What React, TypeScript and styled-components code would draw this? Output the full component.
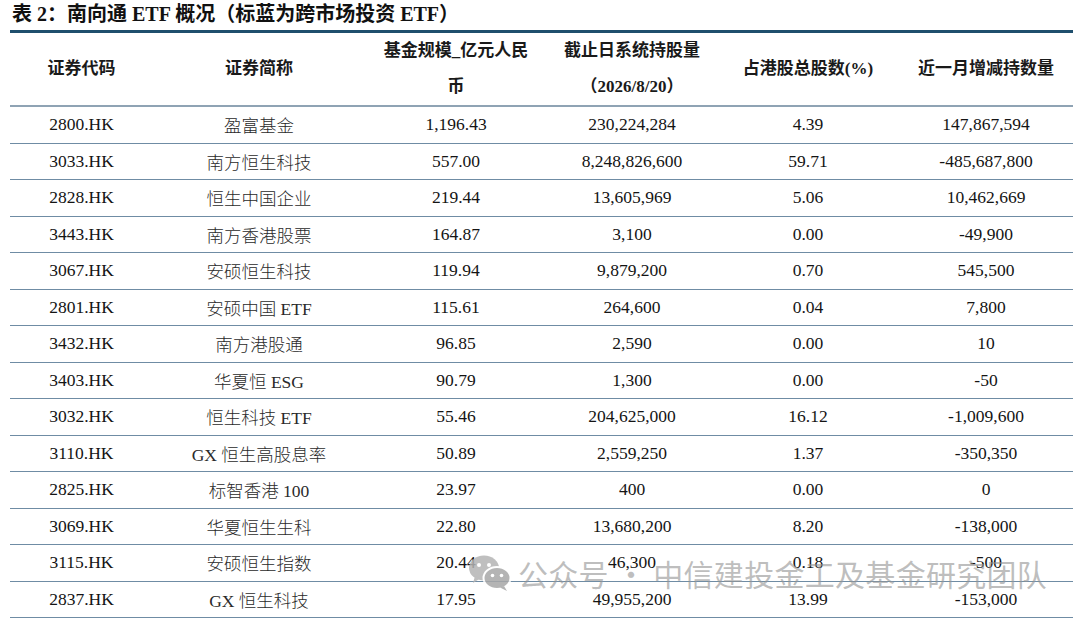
import styled, { createGlobalStyle } from 'styled-components';

interface EtfRow {
  code: string;
  name: string;
  scale: string;
  holding: string;
  ratio: string;
  change: string;
}

const rows: EtfRow[] = [
  { code: '2800.HK', name: '盈富基金', scale: '1,196.43', holding: '230,224,284', ratio: '4.39', change: '147,867,594' },
  { code: '3033.HK', name: '南方恒生科技', scale: '557.00', holding: '8,248,826,600', ratio: '59.71', change: '-485,687,800' },
  { code: '2828.HK', name: '恒生中国企业', scale: '219.44', holding: '13,605,969', ratio: '5.06', change: '10,462,669' },
  { code: '3443.HK', name: '南方香港股票', scale: '164.87', holding: '3,100', ratio: '0.00', change: '-49,900' },
  { code: '3067.HK', name: '安硕恒生科技', scale: '119.94', holding: '9,879,200', ratio: '0.70', change: '545,500' },
  { code: '2801.HK', name: '安硕中国 ETF', scale: '115.61', holding: '264,600', ratio: '0.04', change: '7,800' },
  { code: '3432.HK', name: '南方港股通', scale: '96.85', holding: '2,590', ratio: '0.00', change: '10' },
  { code: '3403.HK', name: '华夏恒 ESG', scale: '90.79', holding: '1,300', ratio: '0.00', change: '-50' },
  { code: '3032.HK', name: '恒生科技 ETF', scale: '55.46', holding: '204,625,000', ratio: '16.12', change: '-1,009,600' },
  { code: '3110.HK', name: 'GX 恒生高股息率', scale: '50.89', holding: '2,559,250', ratio: '1.37', change: '-350,350' },
  { code: '2825.HK', name: '标智香港 100', scale: '23.97', holding: '400', ratio: '0.00', change: '0' },
  { code: '3069.HK', name: '华夏恒生生科', scale: '22.80', holding: '13,680,200', ratio: '8.20', change: '-138,000' },
  { code: '3115.HK', name: '安硕恒生指数', scale: '20.44', holding: '46,300', ratio: '0.18', change: '-500' },
  { code: '2837.HK', name: 'GX 恒生科技', scale: '17.95', holding: '49,955,200', ratio: '13.99', change: '-153,000' },
];

const columnWidths = [143, 212, 182, 170, 182, 174];

function WeChatIcon() {
  return (
    <svg width="44" height="38" viewBox="0 0 44 38">
      <ellipse cx="16" cy="14" rx="15" ry="12.5" fill="#b4b4b4" />
      <path d="M7 22 L5 29 L12 24.5 Z" fill="#b4b4b4" />
      <circle cx="11" cy="11" r="2" fill="#fff" />
      <circle cx="21" cy="11" r="2" fill="#fff" />
      <ellipse cx="29" cy="24" rx="13.5" ry="11" fill="#a8a8a8" stroke="#fff" strokeWidth="2" />
      <path d="M36 32 L39 37 L32 33.5 Z" fill="#a8a8a8" />
      <circle cx="24.5" cy="21.5" r="1.8" fill="#fff" />
      <circle cx="33.5" cy="21.5" r="1.8" fill="#fff" />
    </svg>
  );
}

function App() {
  return (
    <>
      <GlobalStyle />
      <Page>
        <Title>表 2：南向通 ETF 概况（标蓝为跨市场投资 ETF）</Title>
        <TableWrapper>
          <Table>
            <colgroup>
              {columnWidths.map((w, i) => (
                <col key={i} style={{ width: w }} />
              ))}
            </colgroup>
            <thead>
              <tr>
                <HeadCell>证券代码</HeadCell>
                <HeadCell>证券简称</HeadCell>
                <HeadCell>
                  基金规模_亿元人民
                  <br />币
                </HeadCell>
                <HeadCell>
                  截止日系统持股量
                  <br />（2026/8/20）
                </HeadCell>
                <HeadCell>占港股总股数(%)</HeadCell>
                <HeadCell>近一月增减持数量</HeadCell>
              </tr>
            </thead>
            <tbody>
              {rows.map((row) => (
                <tr key={row.code}>
                  <BodyCell>{row.code}</BodyCell>
                  <BodyCell $cjk>{row.name}</BodyCell>
                  <BodyCell>{row.scale}</BodyCell>
                  <BodyCell>{row.holding}</BodyCell>
                  <BodyCell>{row.ratio}</BodyCell>
                  <BodyCell>{row.change}</BodyCell>
                </tr>
              ))}
            </tbody>
          </Table>
          <Watermark>
            <WeChatIcon />
            <WatermarkText>公众号 · 中信建投金工及基金研究团队</WatermarkText>
          </Watermark>
        </TableWrapper>
      </Page>
    </>
  );
}

const GlobalStyle = createGlobalStyle`
  html, body {
    margin: 0;
    padding: 0;
    background: #ffffff;
  }
  body {
    font-family: 'Liberation Serif', 'Noto Sans CJK SC', serif;
    color: #1b1b1b;
  }
`;

const Page = styled.div`
  width: 1080px;
  height: 619px;
  overflow: hidden;
  padding: 1px 7px 0 10px;
  box-sizing: border-box;
`;

const Title = styled.div`
  height: 29px;
  padding-left: 2px;
  font-size: 20px;
  font-weight: 700;
  line-height: 26px;
  color: #111;
  white-space: nowrap;
`;

const TableWrapper = styled.div`
  position: relative;
  width: 1063px;
`;

const Table = styled.table`
  width: 1063px;
  border-collapse: collapse;
  table-layout: fixed;
  border-top: 3px solid #1f4f6d;
`;

const HeadCell = styled.th`
  height: 69px;
  padding: 0;
  text-align: center;
  vertical-align: middle;
  font-size: 17px;
  font-weight: 700;
  line-height: 36px;
  color: #1a1a1a;
  border-bottom: 2px solid #8fa3b4;
  white-space: nowrap;
`;

const BodyCell = styled.td<{ $cjk?: boolean }>`
  height: 35.5px;
  padding: 0;
  text-align: center;
  vertical-align: middle;
  font-size: 17.5px;
  font-weight: ${({ $cjk }) => ($cjk ? 300 : 400)};
  color: ${({ $cjk }) => ($cjk ? '#2a2a2a' : '#141414')};
  border-bottom: 1px solid #6f8ca4;
  white-space: nowrap;
`;

const Watermark = styled.div`
  position: absolute;
  left: 458px;
  top: 521px;
  display: flex;
  align-items: center;
  gap: 6px;
  pointer-events: none;
  opacity: 0.85;
`;

const WatermarkText = styled.span`
  font-family: 'Noto Sans CJK SC', sans-serif;
  font-size: 30px;
  font-weight: 400;
  letter-spacing: 0.3px;
  color: rgba(150, 150, 150, 0.72);
  white-space: nowrap;
`;

export default App;
